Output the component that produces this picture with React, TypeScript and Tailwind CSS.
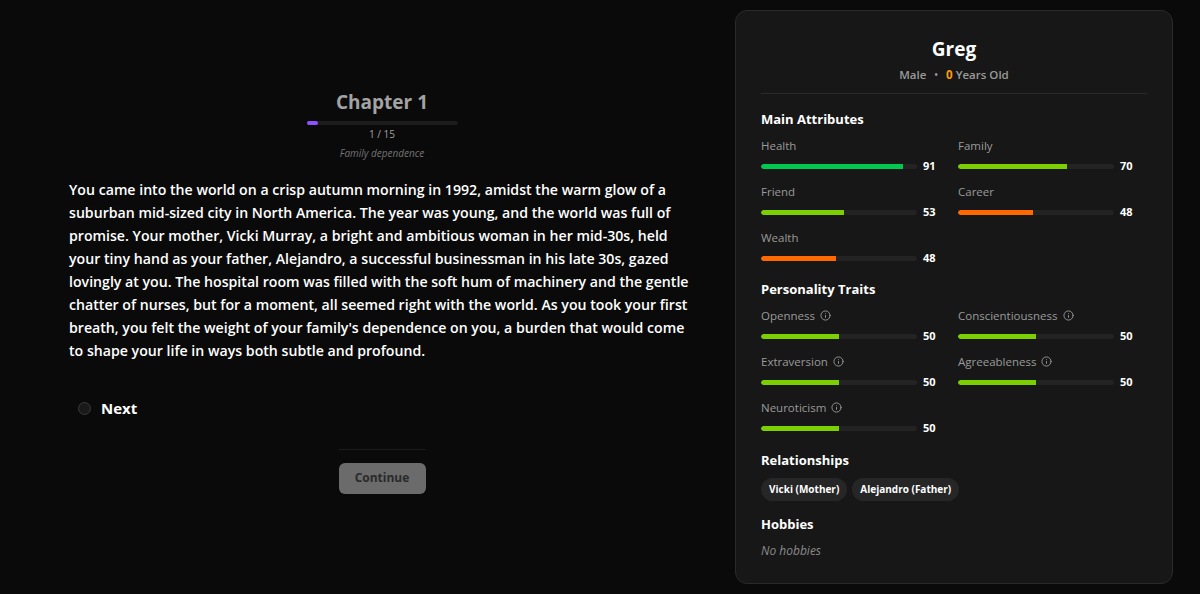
import { Info } from "lucide-react";

const story = [
  "You came into the world on a crisp autumn morning in 1992, amidst the warm glow of a",
  "suburban mid-sized city in North America. The year was young, and the world was full of",
  "promise. Your mother, Vicki Murray, a bright and ambitious woman in her mid-30s, held",
  "your tiny hand as your father, Alejandro, a successful businessman in his late 30s, gazed",
  "lovingly at you. The hospital room was filled with the soft hum of machinery and the gentle",
  "chatter of nurses, but for a moment, all seemed right with the world. As you took your first",
  "breath, you felt the weight of your family's dependence on you, a burden that would come",
  "to shape your life in ways both subtle and profound.",
];

type Stat = { label: string; value: number; color: string; info?: boolean };

const attributes: Stat[] = [
  { label: "Health", value: 91, color: "bg-green-500" },
  { label: "Family", value: 70, color: "bg-lime-500" },
  { label: "Friend", value: 53, color: "bg-lime-500" },
  { label: "Career", value: 48, color: "bg-orange-500" },
  { label: "Wealth", value: 48, color: "bg-orange-500" },
];

const traits: Stat[] = [
  { label: "Openness", value: 50, color: "bg-lime-500", info: true },
  { label: "Conscientiousness", value: 50, color: "bg-lime-500", info: true },
  { label: "Extraversion", value: 50, color: "bg-lime-500", info: true },
  { label: "Agreeableness", value: 50, color: "bg-lime-500", info: true },
  { label: "Neuroticism", value: 50, color: "bg-lime-500", info: true },
];

function StatRow({ stat }: { stat: Stat }) {
  return (
    <div className="flex flex-col">
      <div className="flex h-[16px] items-center gap-[5px] text-[11.5px] font-medium text-[#9a9a9a]">
        <span>{stat.label}</span>
        {stat.info && <Info className="h-[11px] w-[11px]" strokeWidth={2} />}
      </div>
      <div className="mt-[4px] flex items-center">
        <div className="h-[5px] w-[156px] overflow-hidden rounded-full bg-[#232323]">
          <div className={`h-full rounded-l-full ${stat.color}`} style={{ width: `${stat.value}%` }} />
        </div>
        <span className="ml-[6px] text-[11px] font-bold text-white">{stat.value}</span>
      </div>
    </div>
  );
}

function Section({ title, items }: { title: string; items: Stat[] }) {
  return (
    <div>
      <h3 className="text-[13px] font-bold text-white">{title}</h3>
      <div className="mt-[8px] grid grid-cols-[197px_1fr] gap-y-[9.5px]">
        {items.map((s) => (
          <StatRow key={s.label} stat={s} />
        ))}
      </div>
    </div>
  );
}

export default function App() {
  return (
    <div
      className="flex h-[594px] w-[1200px] bg-[#0a0a0a] text-white"
      style={{ fontFamily: '"Open Sans", "Noto Sans", sans-serif' }}
    >
      {/* Story column */}
      <div className="flex w-[735px] items-center pb-[10px]">
        <div className="ml-[69px] w-[640px]">
          <div className="flex w-[626px] flex-col items-center">
            <h1 className="text-[19px] font-bold leading-[24px] text-[#a3a3a3]">Chapter 1</h1>
            <div className="mt-[7px] h-[4px] w-[151px] rounded-full bg-[#1c1c1c]">
              <div className="h-full w-[11px] rounded-full bg-violet-500" />
            </div>
            <div className="mt-[2px] text-[10px] text-[#a3a3a3]">1 / 15</div>
            <div className="mt-[4px] text-[10px] italic text-[#737373]">Family dependence</div>
          </div>

          <p className="mt-[17px] text-[14.15px] font-semibold leading-[23px] text-white">
            {story.map((line, i) => (
              <span key={i}>
                {line}
                {i < story.length - 1 && <br />}
              </span>
            ))}
          </p>

          <label className="mt-[35px] flex items-center gap-[10px] pl-[9px]">
            <span className="h-[13px] w-[13px] rounded-full border border-[#3a3a3a] bg-[#1a1a1a]" />
            <span className="text-[15px] font-bold text-white">Next</span>
          </label>

          <div className="mt-[29px] flex w-[626px] justify-center">
            <div className="w-[87px] border-t border-[#1c1c1c] pt-[13px]">
              <button className="h-[31px] w-full rounded-md bg-[#6b6b6b] text-[12px] font-bold text-[#2a2a2a]">
                Continue
              </button>
            </div>
          </div>
        </div>
      </div>

      {/* Character panel */}
      <aside className="my-[10px] w-[438px] rounded-xl border border-[#2a2a2a] bg-[#171717] px-[25px] pt-[24px]">
        <div className="flex flex-col items-center">
          <h2 className="text-[19px] font-bold leading-[28px] text-white">Greg</h2>
          <div className="mt-[3px] flex items-center gap-[8px] text-[11.5px] font-semibold text-[#9a9a9a]">
            <span>Male</span>
            <span className="text-[10px]">•</span>
            <span>
              <span className="font-bold text-amber-500">0</span> Years Old
            </span>
          </div>
        </div>
        <div className="mt-[10px] border-t border-[#2a2a2a]" />

        <div className="mt-[16px]">
          <Section title="Main Attributes" items={attributes} />
        </div>
        <div className="mt-[14px]">
          <Section title="Personality Traits" items={traits} />
        </div>

        <div className="mt-[15px]">
          <h3 className="text-[13px] font-bold text-white">Relationships</h3>
          <div className="mt-[7px] flex gap-[5px]">
            <span className="rounded-full bg-[#262626] px-[8px] py-[4px] text-[10px] font-bold text-white">Vicki (Mother)</span>
            <span className="rounded-full bg-[#262626] px-[8px] py-[4px] text-[10px] font-bold text-white">Alejandro (Father)</span>
          </div>
        </div>

        <div className="mt-[14px]">
          <h3 className="text-[13px] font-bold text-white">Hobbies</h3>
          <p className="mt-[8px] text-[12px] italic text-[#8a8a8a]">No hobbies</p>
        </div>
      </aside>
    </div>
  );
}
